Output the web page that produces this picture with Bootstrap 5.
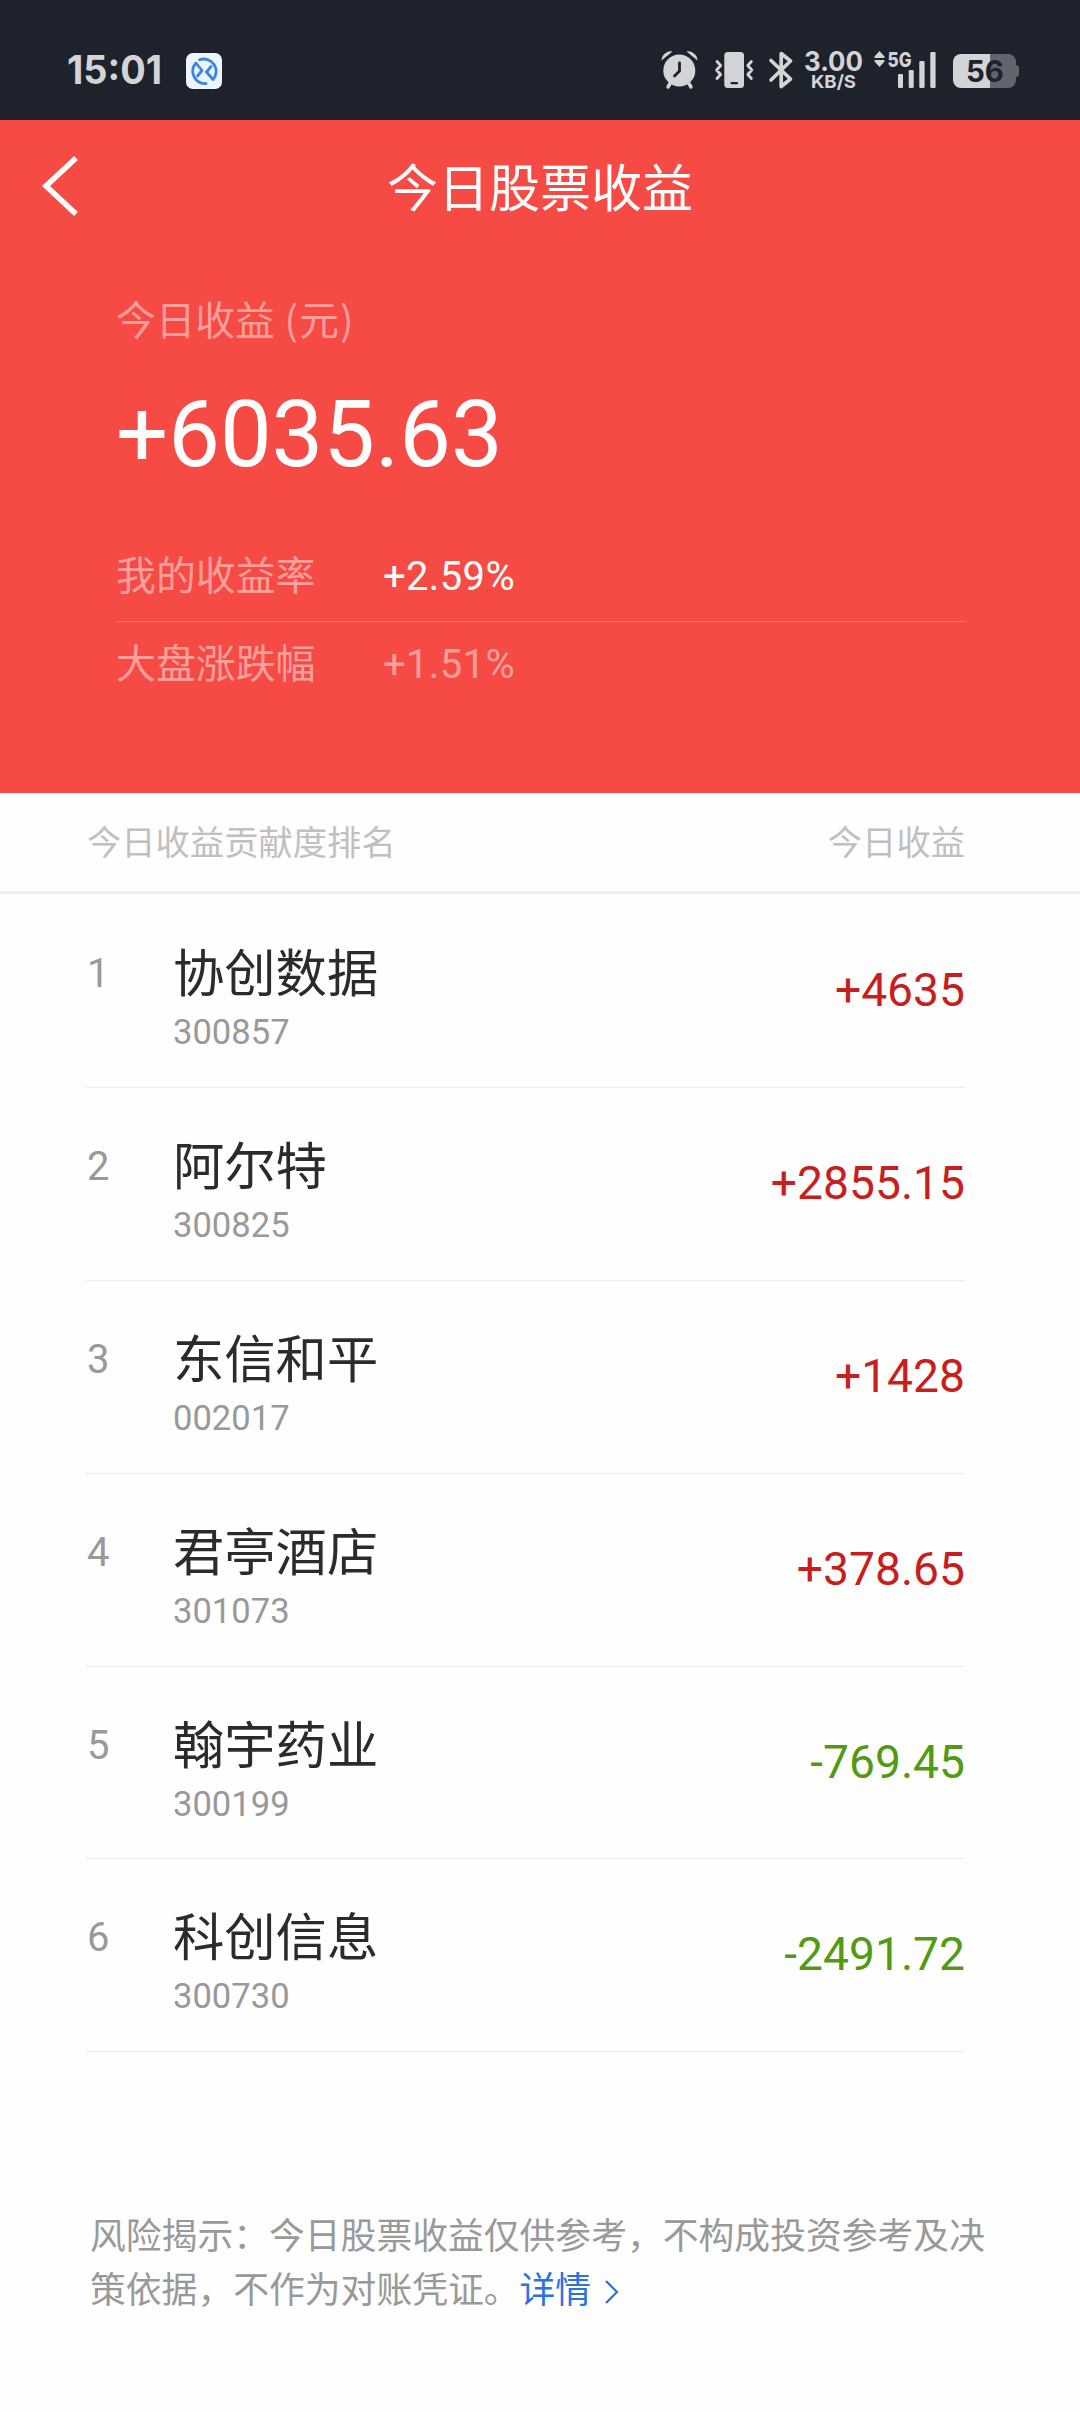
<!DOCTYPE html>
<html lang="zh-CN">
<head>
<meta charset="utf-8">
<meta name="viewport" content="width=device-width, initial-scale=1">
<title>今日股票收益</title>
<link rel="stylesheet" href="https://cdn.jsdelivr.net/npm/bootstrap@5.3.0/dist/css/bootstrap.min.css">
<style>
body{font-family:Roboto,"Noto Sans CJK SC",sans-serif;background:#fefefe;color:#2b2b2b;overflow-x:hidden}
svg{display:block;flex:none}
svg text{font-family:Inter,sans-serif}
.statusbar{height:120px;background:#1e222d;padding:40px 55px 0 60px;color:#d3d4d6}
.hero{height:673px;background:#f64a45;color:#fff}
.titlebar{height:134px;padding-top:5px}
.titlebar h1{font-size:51px;font-weight:400;line-height:60px}
.back{left:39px;top:32px}
.summary{padding:36px 114px 0 116px}
.soft{color:#ff9f9b}
.cap{font-size:39.7px;line-height:56px}
.paren{font-family:"Noto Sans CJK SC",sans-serif;letter-spacing:1.2px}
.total{font-size:92px;line-height:108px;margin-top:31px}
.rates{margin-top:45px}
.rate{font-size:39.9px;height:87px;line-height:86px}
.rate span:first-child{width:267px}
.rate span:last-child{letter-spacing:.4px}
.rate+.rate{border-top:1px solid #f7726f}
.thead-bar{height:101px;padding:3px 115px 0 87px;font-size:34.3px;color:#c0c0c0;border-bottom:3px solid #eee}
.stocks{padding:1px 115px 0 86px}
.stock{height:192.9px;padding-top:46px;border-bottom:1px solid #ececec}
.rank{width:87px;font-size:40px;line-height:66px;padding-left:1px;color:#999}
.sname{font-size:51.3px;line-height:66px;padding-top:1px;color:#2b2b2b}
.code{font-size:34.6px;line-height:42px;color:#999;margin-top:3px}
.amount{font-size:46.2px;line-height:99px}
.up{color:#c81e1e}.down{color:#529a10}
.note{padding:158px 80px 0 90px;font-size:35.8px;line-height:54px;color:#999}
.note a{color:#2b73dc}
.more{margin:-4px 0 0 13px}
</style>
</head>
<body>
<div class="statusbar d-flex justify-content-between">
  <div class="d-flex">
    <svg width="120" height="60" viewBox="60 40 120 60" fill="currentColor"><text x="67" y="83.500" font-size="39" font-weight="650" textLength="95" lengthAdjust="spacingAndGlyphs">15:01</text></svg>
    <svg width="50" height="60" viewBox="180 40 50 60"><rect x="186" y="53" width="36" height="36" rx="7" fill="#edf4fd"/><g fill="none" stroke="#3b87df" stroke-width="2.800" stroke-linecap="round" stroke-linejoin="round"><path d="M202 70.500L196 63A12.300 12.300 0 0 0 206 83.500M199.500 59.800A12.300 12.300 0 0 1 213 79.500l-6.500-7.500"/><path d="M202 70.500l-4.500 5.500M206.500 72l4.500-5.500"/></g></svg>
  </div>
  <div class="d-flex">
    <svg width="50" height="60" viewBox="656 40 50 60" fill="currentColor"><circle cx="679.300" cy="70.500" r="16"/><path d="M661.500 60.500a9.500 9.500 0 0 1 11-9zM697.500 60.500a9.500 9.500 0 0 0-11-9z"/><path d="M671 82l-3 5M688 82l3 5" stroke="currentColor" stroke-width="3.500" stroke-linecap="round"/><path d="M679.500 63v8l-5 5" fill="none" stroke="#1e222d" stroke-width="2.800" stroke-linecap="round"/></svg>
    <svg width="56" height="60" viewBox="706 40 56 60" fill="currentColor"><rect x="724.300" y="52" width="19.700" height="36" rx="3.500"/><path d="M731.500 83.200h5.500" stroke="#1e222d" stroke-width="2.200" stroke-linecap="round"/><path d="M717 61.500l3.600 4-4 4.500 4 4.500-3.600 4M751.400 61.500l-3.600 4 4 4.500-4 4.500 3.600 4" fill="none" stroke="currentColor" stroke-width="2.800" stroke-linecap="round" stroke-linejoin="round"/></svg>
    <svg width="38" height="60" viewBox="762 40 38 60" fill="none" stroke="currentColor" stroke-width="3.700" stroke-linecap="round" stroke-linejoin="round"><path d="M771 60.500l19.500 18.500-9.300 7.500V53.500l9.300 7.500L771 80"/></svg>
    <svg width="68" height="60" viewBox="800 40 68 60" fill="currentColor" font-weight="700"><text x="804" y="71" font-size="27" textLength="59" lengthAdjust="spacingAndGlyphs">3.00</text><text x="811" y="87.500" font-size="18" textLength="45" lengthAdjust="spacingAndGlyphs">KB/S</text></svg>
    <svg width="77" height="60" viewBox="868 40 77 60" fill="currentColor"><path d="M879.500 51l5 5.500v1.500h-10v-1.500zM874.500 60h10v1.500l-5 5.500-5-5.500z"/><text x="887.500" y="67" font-size="20.500" font-weight="800" textLength="24" lengthAdjust="spacingAndGlyphs">5G</text><rect x="898" y="74" width="5" height="14" rx="1.200"/><rect x="908.700" y="70" width="5" height="18" rx="1.200"/><rect x="919.300" y="61" width="5.300" height="27" rx="1.200"/><rect x="930.300" y="52" width="5.300" height="36" rx="1.200"/></svg>
    <svg width="80" height="60" viewBox="945 40 80 60"><path d="M990 54h18a8 8 0 0 1 8 8v3q3 0 3 3v6q0 3-3 3v3a8 8 0 0 1-8 8h-18z" fill="#62656d"/><path d="M990 54h-29a8 8 0 0 0-8 8v18a8 8 0 0 0 8 8h29z" fill="#d3d4d6"/><text x="966" y="82" font-size="30" font-weight="700" fill="#1e222d" textLength="38" lengthAdjust="spacingAndGlyphs">56</text></svg>
  </div>
</div>

<header class="hero">
  <div class="titlebar position-relative d-flex align-items-center justify-content-center">
    <a href="#" class="back position-absolute text-white" aria-label="返回"><svg width="44" height="70" viewBox="0 0 44 70" fill="none" stroke="currentColor" stroke-width="5.500"><path d="M37 6L7 34l30 28"/></svg></a>
    <h1 class="m-0">今日股票收益</h1>
  </div>
  <div class="summary">
    <div class="cap soft">今日收益 <span class="paren">(元)</span></div>
    <div class="total">+6035.63</div>
    <div class="rates">
      <div class="rate d-flex"><span class="soft">我的收益率</span><span>+2.59%</span></div>
      <div class="rate d-flex soft"><span>大盘涨跌幅</span><span>+1.51%</span></div>
    </div>
  </div>
</header>

<main>
  <div class="thead-bar d-flex justify-content-between align-items-center"><span>今日收益贡献度排名</span><span>今日收益</span></div>
  <div class="stocks">
    <div class="stock d-flex"><div class="rank">1</div><div class="flex-grow-1"><div class="sname">协创数据</div><div class="code">300857</div></div><div class="amount up">+4635</div></div>
    <div class="stock d-flex"><div class="rank">2</div><div class="flex-grow-1"><div class="sname">阿尔特</div><div class="code">300825</div></div><div class="amount up">+2855.15</div></div>
    <div class="stock d-flex"><div class="rank">3</div><div class="flex-grow-1"><div class="sname">东信和平</div><div class="code">002017</div></div><div class="amount up">+1428</div></div>
    <div class="stock d-flex"><div class="rank">4</div><div class="flex-grow-1"><div class="sname">君亭酒店</div><div class="code">301073</div></div><div class="amount up">+378.65</div></div>
    <div class="stock d-flex"><div class="rank">5</div><div class="flex-grow-1"><div class="sname">翰宇药业</div><div class="code">300199</div></div><div class="amount down">-769.45</div></div>
    <div class="stock d-flex"><div class="rank">6</div><div class="flex-grow-1"><div class="sname">科创信息</div><div class="code">300730</div></div><div class="amount down">-2491.72</div></div>
  </div>
  <p class="note m-0">风险揭示：今日股票收益仅供参考，不构成投资参考及决<br>策依据，不作为对账凭证。<a href="#" class="text-decoration-none">详情<svg class="d-inline-block more" width="15" height="26" viewBox="0 0 15 26" fill="none" stroke="currentColor" stroke-width="2.200"><path d="M2 2l11 11L2 24"/></svg></a></p>
</main>
<script src="https://cdn.jsdelivr.net/npm/bootstrap@5.3.0/dist/js/bootstrap.bundle.min.js"></script>
</body>
</html>
